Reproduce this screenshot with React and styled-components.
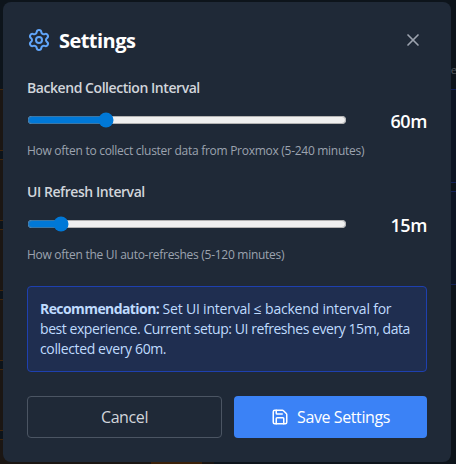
import React, { useState } from "react";
import styled, { createGlobalStyle } from "styled-components";
import { Settings, X, Save } from "lucide-react";

const GlobalStyle = createGlobalStyle`
  *, *::before, *::after { box-sizing: border-box; }
  body { margin: 0; background: #0d141b; overflow: hidden; }
  button, input { font: inherit; }
`;

const Page = styled.div`
  position: relative;
  width: 456px;
  height: 464px;
  padding: 2px 5px 2px 3px;
  overflow: hidden;
  font-family: "Segoe UI", "Open Sans", "Noto Sans", sans-serif;
`;

/* Dimmed dashboard that stays visible around the dialog */
const Backdrop = styled.div`
  position: absolute;
  inset: 0;
  display: flex;
  justify-content: space-between;
  padding-top: 89px;
`;

const TileColumn = styled.div`
  display: flex;
  flex-direction: column;
  gap: 8px;
  width: ${(p) => p.$width}px;
`;

const Tile = styled.div`
  flex: none;
  display: flex;
  justify-content: flex-end;
  align-items: flex-start;
  height: ${(p) => p.$height}px;
  padding: 22px 12px 0;
  background: ${(p) => (p.$tone === "blue" ? "#0d1524" : "#1b1613")};
  border: solid ${(p) => (p.$tone === "blue" ? "#142258" : "#40250b")};
  border-width: 1px 0;
`;

const TileTag = styled.div`
  width: 51px;
  height: 12px;
  background: #3b210a;
`;

const Peek = styled.span`
  position: absolute;
  right: 0;
  top: 62px;
  font-size: 11px;
  line-height: 16px;
  letter-spacing: -1px;
  color: #50545a;
`;

const Dialog = styled.section`
  position: relative;
  width: 448px;
  height: 460px;
  padding: 24px;
  background: #1f2937;
  border-radius: 8px;
  display: flex;
  flex-direction: column;
  gap: 24px;
`;

const Header = styled.header`
  display: flex;
  align-items: center;
  justify-content: space-between;
  height: 28px;
`;

const TitleGroup = styled.div`
  display: flex;
  align-items: center;
  gap: 8px;
  color: #60a5fa;
`;

const Title = styled.h2`
  margin: 0;
  padding-top: 2px;
  font-size: 20px;
  line-height: 28px;
  font-weight: 700;
  letter-spacing: -0.55px;
  color: #fff;
`;

const CloseButton = styled.button`
  display: flex;
  padding: 4px;
  border: 0;
  background: none;
  color: #9ca3af;
`;

const Field = styled.div`
  display: flex;
  flex-direction: column;
  gap: 8px;
  height: 80px;
`;

const Label = styled.label`
  font-size: 14px;
  line-height: 20px;
  font-weight: 600;
  letter-spacing: -0.44px;
  color: #d1d5db;
`;

const SliderRow = styled.div`
  display: flex;
  align-items: center;
  gap: 16px;
  height: 28px;
`;

const Slider = styled.input`
  flex: 1;
  min-width: 0;
  margin: 0;
  accent-color: #0078d7;
`;

const Value = styled.span`
  width: 64px;
  padding-top: 2px;
  text-align: right;
  font-size: 18px;
  line-height: 28px;
  font-weight: 600;
  letter-spacing: -0.4px;
  color: #fff;
`;

const Hint = styled.p`
  margin: 0;
  padding-top: 1px;
  font-size: 12px;
  line-height: 16px;
  letter-spacing: -0.28px;
  white-space: nowrap;
  color: #9ca3af;
`;

const Notice = styled.div`
  height: 86px;
  padding: 12px;
  border: 1px solid #1e40af;
  border-radius: 4px;
  background: #1f2e50;
  font-size: 14px;
  line-height: 20px;
  white-space: nowrap;
  color: #bfdbfe;
`;

const NoticeLine = styled.div`
  letter-spacing: ${(p) => p.$tracking}px;
`;

const NoticeLead = styled.strong`
  font-weight: 700;
  letter-spacing: -0.58px;
`;

const Actions = styled.footer`
  display: grid;
  grid-template-columns: 195px 193px;
  gap: 12px;
  height: 42px;
`;

const ActionButton = styled.button`
  display: flex;
  align-items: center;
  justify-content: center;
  gap: 8px;
  padding: 0;
  border: ${(p) => (p.$primary ? "0" : "1px solid #4b5563")};
  border-radius: 4px;
  background: ${(p) => (p.$primary ? "#3b82f6" : "transparent")};
  color: ${(p) => (p.$primary ? "#fff" : "#d1d5db")};
  font-size: 16px;
  line-height: 24px;
  letter-spacing: -0.4px;
`;

function IntervalField({ id, label, hint, value, min, max, onChange }) {
  return (
    <Field>
      <Label htmlFor={id}>{label}</Label>
      <SliderRow>
        <Slider id={id} type="range" min={min} max={max} value={value}
          onChange={(e) => onChange(Number(e.target.value))} />
        <Value>{value}m</Value>
      </SliderRow>
      <Hint>{hint}</Hint>
    </Field>
  );
}

export default function App() {
  const [backend, setBackend] = useState(60);
  const [ui, setUi] = useState(15);
  return (
    <Page>
      <GlobalStyle />
      <Backdrop aria-hidden="true">
        <TileColumn $width={214}>
          {[1, 2, 3, 4, 5].map((n) => <Tile key={n} $height={62} />)}
          <Tile $height={62}><TileTag /></Tile>
        </TileColumn>
        <TileColumn $width={20}>
          <Tile $tone="blue" $height={94} />
          <Tile $tone="blue" $height={94} />
        </TileColumn>
        <Peek>e</Peek>
      </Backdrop>
      <Dialog>
        <Header>
          <TitleGroup>
            <Settings size={24} />
            <Title>Settings</Title>
          </TitleGroup>
          <CloseButton aria-label="Close"><X size={20} /></CloseButton>
        </Header>
        <IntervalField id="backend" label="Backend Collection Interval" min={5} max={240}
          hint="How often to collect cluster data from Proxmox (5-240 minutes)"
          value={backend} onChange={setBackend} />
        <IntervalField id="ui" label="UI Refresh Interval" min={5} max={120}
          hint="How often the UI auto-refreshes (5-120 minutes)"
          value={ui} onChange={setUi} />
        <Notice>
          <NoticeLine $tracking={-0.21}>
            <NoticeLead>Recommendation:</NoticeLead> Set UI interval ≤ backend interval for
          </NoticeLine>
          <NoticeLine $tracking={-0.44}>
            best experience. Current setup: UI refreshes every {ui}m, data
          </NoticeLine>
          <NoticeLine $tracking={-0.37}>collected every {backend}m.</NoticeLine>
        </Notice>
        <Actions>
          <ActionButton>Cancel</ActionButton>
          <ActionButton $primary><Save size={18} />Save Settings</ActionButton>
        </Actions>
      </Dialog>
    </Page>
  );
}
